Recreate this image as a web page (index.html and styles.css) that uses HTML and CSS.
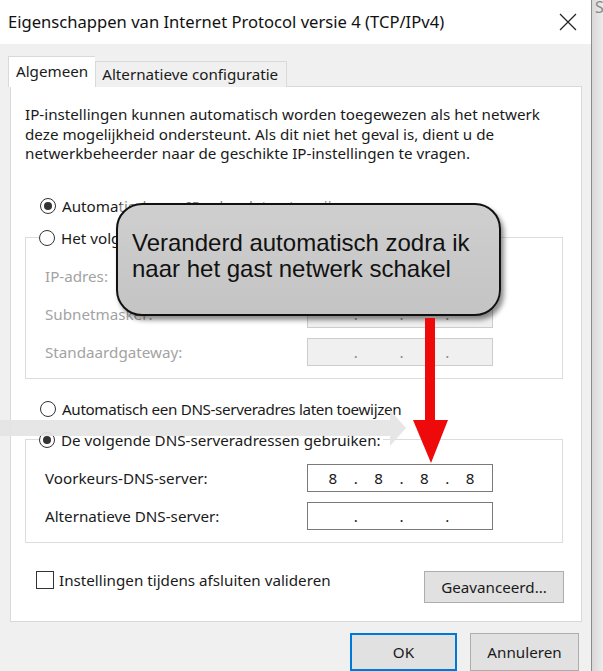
FILE: index.html
```html
<!DOCTYPE html>
<html lang="nl">
<head>
    <meta charset="UTF-8">
    <title>Eigenschappen van Internet Protocol versie 4 (TCP/IPv4)</title>
    <link rel="stylesheet" href="styles.css">
</head>
<body>
    <div class="screen">
        <div class="window">
            <!-- Title bar -->
            <div class="titlebar">
                <span class="title">Eigenschappen van Internet Protocol versie 4 (TCP/IPv4)</span>
                <svg class="close" width="18" height="18" viewBox="0 0 18 18">
                    <path d="M1 1 L17 17 M17 1 L1 17" stroke="#222" stroke-width="1.2" fill="none"/>
                </svg>
            </div>

            <div class="dialog">
                <div class="tabs">
                    <div class="tab active">Algemeen</div>
                    <div class="tab">Alternatieve configuratie</div>
                </div>

                <div class="panel">
                    <p class="intro">IP-instellingen kunnen automatisch worden toegewezen als het netwerk deze mogelijkheid ondersteunt. Als dit niet het geval is, dient u de netwerkbeheerder naar de geschikte IP-instellingen te vragen.</p>

                    <div class="radio checked radio-ip">
                        <span class="radio-circle"></span>
                        <span>Automatisch een IP-adres laten toewijzen</span>
                    </div>

                    <fieldset class="group disabled group-ip">
                        <legend class="radio">
                            <span class="radio-circle"></span>
                            <span>Het volgende IP-adres gebruiken:</span>
                        </legend>
                        <div class="group-body">
                            <div class="field">
                                <span class="field-label">IP-adres:</span>
                                <div class="ip-box"><span class="seg"></span><span class="dot">.</span><span class="seg"></span><span class="dot">.</span><span class="seg"></span><span class="dot">.</span><span class="seg"></span></div>
                            </div>
                            <div class="field">
                                <span class="field-label">Subnetmasker:</span>
                                <div class="ip-box"><span class="seg"></span><span class="dot">.</span><span class="seg"></span><span class="dot">.</span><span class="seg"></span><span class="dot">.</span><span class="seg"></span></div>
                            </div>
                            <div class="field">
                                <span class="field-label">Standaardgateway:</span>
                                <div class="ip-box"><span class="seg"></span><span class="dot">.</span><span class="seg"></span><span class="dot">.</span><span class="seg"></span><span class="dot">.</span><span class="seg"></span></div>
                            </div>
                        </div>
                    </fieldset>

                    <div class="radio radio-dns">
                        <span class="radio-circle"></span>
                        <span class="tight">Automatisch een DNS-serveradres laten toewijzen</span>
                    </div>

                    <fieldset class="group group-dns">
                        <legend class="radio checked">
                            <span class="radio-circle"></span>
                            <span>De volgende DNS-serveradressen gebruiken:</span>
                        </legend>
                        <div class="group-body">
                            <div class="field">
                                <span class="field-label">Voorkeurs-DNS-server:</span>
                                <div class="ip-box"><span class="seg">8</span><span class="dot">.</span><span class="seg">8</span><span class="dot">.</span><span class="seg">8</span><span class="dot">.</span><span class="seg">8</span></div>
                            </div>
                            <div class="field">
                                <span class="field-label">Alternatieve DNS-server:</span>
                                <div class="ip-box"><span class="seg"></span><span class="dot">.</span><span class="seg"></span><span class="dot">.</span><span class="seg"></span><span class="dot">.</span><span class="seg"></span></div>
                            </div>
                        </div>
                    </fieldset>

                    <div class="panel-footer">
                        <label class="check">
                            <span class="check-box"></span>
                            <span>Instellingen tijdens afsluiten valideren</span>
                        </label>
                        <button class="btn btn-advanced">Geavanceerd...</button>
                    </div>
                </div>

                <div class="actions">
                    <button class="btn btn-ok">OK</button>
                    <button class="btn btn-cancel">Annuleren</button>
                </div>
            </div>
        </div>

        <!-- Background window edge -->
        <div class="strip"><span class="strip-letter">S</span></div>

        <!-- Annotations drawn on top of the screenshot -->
        <svg class="gray-arrow" width="410" height="40" viewBox="0 0 410 40">
            <polygon points="0,11 390,11 390,1 406,19 390,37 390,27 0,27" fill="#e4e4e4" fill-opacity="0.92"/>
        </svg>

        <div class="callout">Veranderd automatisch zodra ik naar het gast netwerk schakel</div>

        <svg class="red-arrow" width="36" height="146" viewBox="0 0 36 146">
            <rect x="12" y="0" width="10" height="110" fill="#ee0a0a"/>
            <polygon points="0,102 35,102 18,145" fill="#ee0a0a"/>
        </svg>
    </div>
</body>
</html>
```

FILE: styles.css
```css
* {
    margin: 0;
    padding: 0;
    box-sizing: border-box;
}

body {
    font-family: 'Noto Sans', 'Open Sans', sans-serif;
    font-size: 15.2px;
    color: #1a1a1a;
    background: #ffffff;
    overflow: hidden;
}

.screen {
    position: relative;
    display: flex;
    width: 603px;
    height: 671px;
    overflow: hidden;
}

.window {
    width: 592px;
    height: 671px;
    border-right: 1px solid #8c8c8c;
    display: flex;
    flex-direction: column;
}

/* Title bar */
.titlebar {
    height: 45px;
    background: #ffffff;
    display: flex;
    align-items: center;
    justify-content: space-between;
    padding: 0 14px 2px 8px;
}

.title {
    font-size: 16.6px;
    color: #111;
}

.close {
    margin-top: 2px;
}

/* Dialog body */
.dialog {
    flex: 1;
    background: #f0f0f0;
    padding: 12px 9px 0 10px;
    display: flex;
    flex-direction: column;
}

.tabs {
    display: flex;
    align-items: flex-end;
    margin-left: -2px;
    height: 31px;
    margin-bottom: -1px;
    position: relative;
    z-index: 1;
}

.tab {
    height: 26px;
    padding: 0 8px 0 6px;
    border: 1px solid #d9d9d9;
    border-bottom: none;
    background: #f0f0f0;
    line-height: 24px;
}

.tab.active {
    height: 31px;
    background: #ffffff;
    padding: 0 7px 0 7px;
    line-height: 28px;
    border-right: none;
}

.panel {
    height: 536px;
    background: #ffffff;
    border: 1px solid #d9d9d9;
    padding: 18px 17px 0 14px;
    display: flex;
    flex-direction: column;
}

.intro {
    line-height: 19.5px;
    padding-right: 10px;
}

/* Radio buttons */
.radio {
    display: flex;
    align-items: center;
    height: 20px;
    gap: 6px;
}

.radio-circle {
    width: 16px;
    height: 16px;
    border: 1px solid #333;
    border-radius: 50%;
    background: #fff;
    position: relative;
    flex-shrink: 0;
}

.radio.checked .radio-circle::after {
    content: '';
    position: absolute;
    width: 8px;
    height: 8px;
    border-radius: 50%;
    background: #333;
    top: 3px;
    left: 3px;
}

.tight {
    letter-spacing: -0.35px;
}

.radio-ip {
    margin: 32px 0 0 15px;
}

.radio-dns {
    margin: 20px 0 0 15px;
}

/* Group boxes */
.group {
    border: 1px solid #dcdcdc;
    width: 538px;
}

.group legend {
    margin-left: 13px;
    padding-right: 2px;
}

.group-ip {
    margin-top: 12px;
}

.group-dns {
    margin-top: 11px;
}

.group-body {
    padding: 14px 0 12px 19px;
    display: flex;
    flex-direction: column;
    gap: 10px;
}

.field {
    display: flex;
    align-items: center;
    height: 28px;
}

.field-label {
    width: 262px;
}

.disabled .field-label {
    color: #a3a3a3;
}

.ip-box {
    width: 186px;
    height: 28px;
    border: 1px solid #7a7a7a;
    display: flex;
    align-items: center;
    padding: 0 2px 0 5px;
    background: #fff;
}

.disabled .ip-box {
    border-color: #cccccc;
    background: #f0f0f0;
    color: #8a8a8a;
}

.seg {
    width: 40px;
    text-align: center;
}

.dot {
    width: 6px;
    text-align: center;
}

/* Footer of the tab panel */
.panel-footer {
    margin-top: 28px;
    display: flex;
    justify-content: space-between;
    align-items: flex-start;
}

.check {
    display: flex;
    align-items: center;
    gap: 5px;
    margin: 0 0 0 11px;
    height: 18px;
}

.check-box {
    width: 18px;
    height: 18px;
    border: 1px solid #333;
    background: #fff;
}

.btn {
    font-family: inherit;
    font-size: 15.2px;
    color: #1a1a1a;
    background: #e1e1e1;
    border: 1px solid #adadad;
}

.btn-advanced {
    width: 140px;
    height: 32px;
}

.actions {
    display: flex;
    justify-content: flex-end;
    gap: 13px;
    padding-top: 11px;
    padding-right: 3px;
}

.btn-ok {
    width: 107px;
    height: 38px;
    border: 2px solid #0078d7;
}

.btn-cancel {
    width: 109px;
    height: 38px;
}

/* Neighbouring window */
.strip {
    flex: 1;
    background: linear-gradient(90deg, #d8d8d8, #ececec);
    position: relative;
    overflow: hidden;
}

.strip-letter {
    position: absolute;
    top: -4px;
    left: 3px;
    font-size: 16px;
    color: #888;
}

/* Annotations */
.gray-arrow {
    position: absolute;
    left: 0;
    top: 409px;
}

.callout {
    position: absolute;
    left: 116px;
    top: 203px;
    width: 385px;
    height: 113px;
    padding: 25px 10px 0 14px;
    border: 2px solid #111;
    border-radius: 26px;
    background: linear-gradient(180deg, #cfcfcf, #c4c4c4);
    font-family: 'Liberation Sans', Arial, sans-serif;
    font-size: 24px;
    line-height: 26px;
    color: #111;
    box-shadow: 3px 4px 5px rgba(0, 0, 0, 0.45), 0 -10px 0 rgba(255, 255, 255, 0.45);
}

.red-arrow {
    position: absolute;
    left: 413px;
    top: 318px;
}
```
